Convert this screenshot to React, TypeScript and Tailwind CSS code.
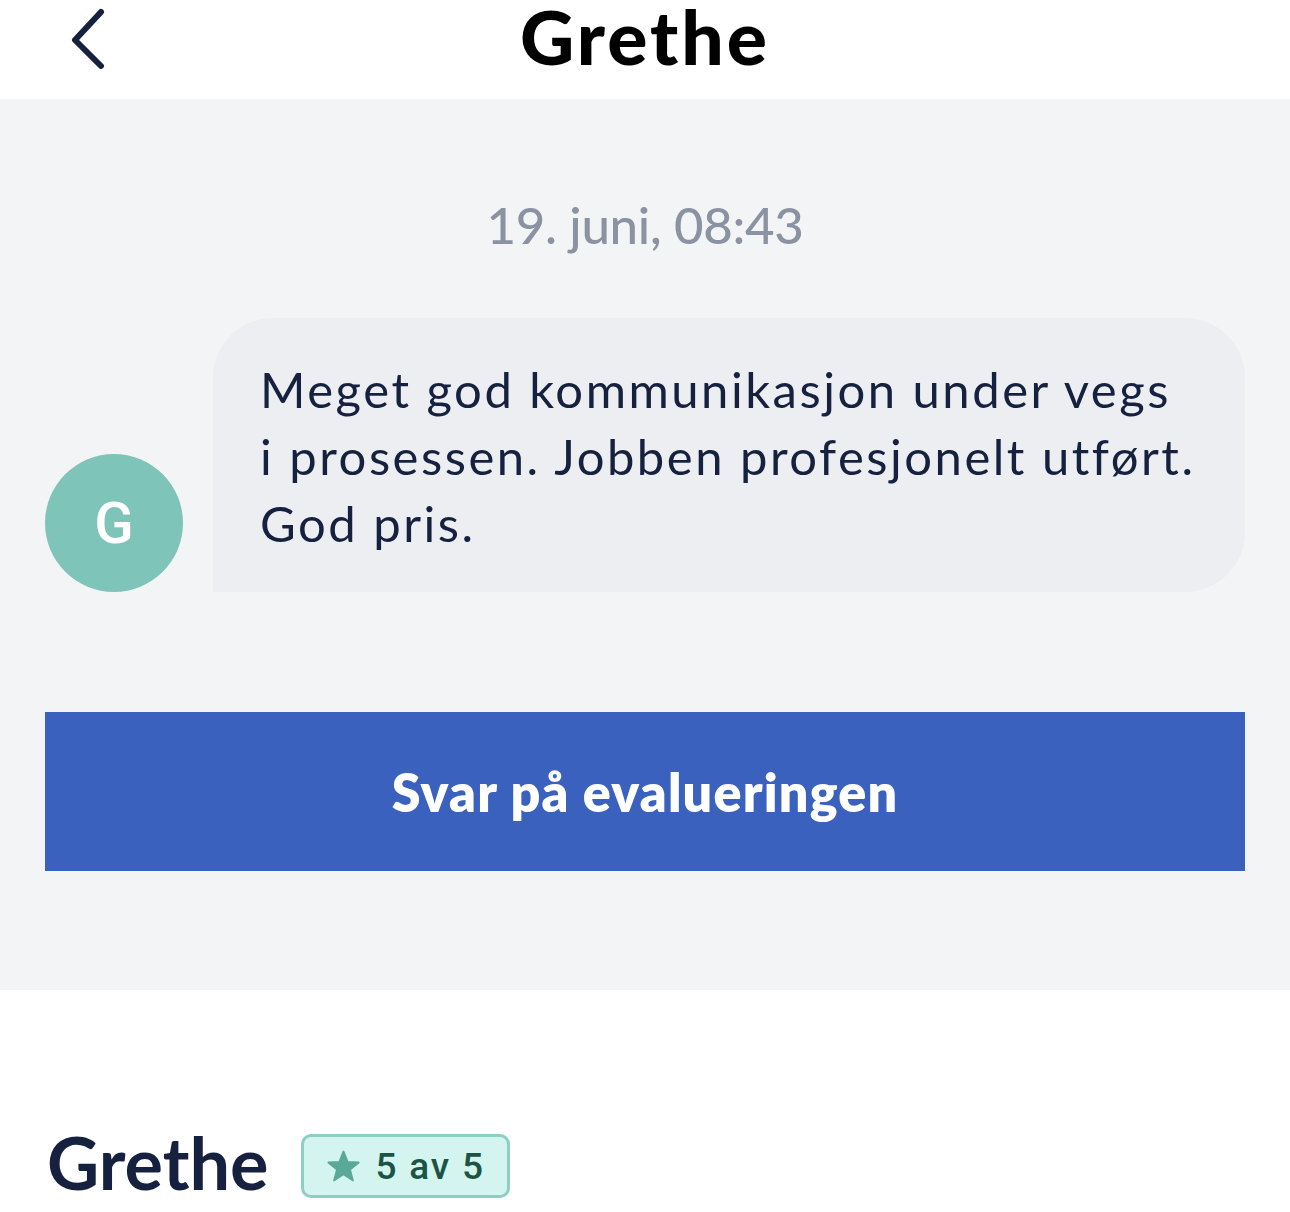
import React from "react";

export default function App() {
  return (
    <div className="w-[1290px] h-[1212px] overflow-hidden bg-white font-['Lato',sans-serif]">
      {/* Header */}
      <div className="h-[99px] bg-white relative flex items-start justify-center">
        <button className="absolute left-[62px] top-[6px] w-[50px] h-[66px] flex items-center justify-center">
          <svg width="44" height="62" viewBox="0 0 44 62" fill="none">
            <path d="M36 4 L10 32 L36 58" stroke="#16213f" strokeWidth="6" strokeLinecap="round" strokeLinejoin="round" />
          </svg>
        </button>
        <h1 className="text-[75px] leading-[72px] font-black text-black tracking-[3px]">Grethe</h1>
      </div>

      {/* Gray conversation area */}
      <div className="bg-[#f3f4f6] h-[891px] px-[45px] pt-[96px]">
        <div className="text-center text-[51px] leading-[60px] text-[#8b92a1] font-medium tracking-[-0.3px]">19. juni, 08:43</div>
        <div className="mt-[63px] flex items-end gap-[30px]">
          <div className="w-[138px] h-[138px] rounded-full bg-[#7fc4b9] flex items-center justify-center shrink-0">
            <span className="text-white text-[58px] font-['Roboto',sans-serif] font-medium leading-none">G</span>
          </div>
          <div className="flex-1 bg-[#eceef2] rounded-tl-[60px] rounded-tr-[60px] rounded-br-[60px] pl-[47px] pr-[30px] pt-[38px] pb-[35px]">
            <p className="text-[49px] leading-[67px] text-[#16213f] whitespace-nowrap tracking-[2.5px]">
              Meget god kommunikasjon under vegs
              <br />
              i prosessen. Jobben profesjonelt utført.
              <br />
              God pris.
            </p>
          </div>
        </div>
        <button className="mt-[120px] w-full h-[159px] bg-[#3b61bf] flex items-center justify-center">
          <span className="text-white text-[52px] font-extrabold tracking-[1.2px]">Svar på evalueringen</span>
        </button>
      </div>

      {/* Bottom white */}
      <div className="px-[47px] pt-[136px] flex items-center gap-[33px]">
        <h2 className="text-[72px] leading-none font-bold text-[#16213f]">Grethe</h2>
        <div className="mt-[8px] h-[64px] px-[22px] rounded-[10px] border-[3px] border-[#8ccfc3] bg-[#d3f4ef] flex items-center gap-[14px]">
          <svg width="35" height="33" viewBox="0 0 24 23">
            <path d="M12 1 L14.9 8.3 L22.6 8.7 L16.6 13.7 L18.6 21.3 L12 17 L5.4 21.3 L7.4 13.7 L1.4 8.7 L9.1 8.3 Z" fill="#5aa897" stroke="#5aa897" strokeWidth="1.2" strokeLinejoin="round" />
          </svg>
          <span className="text-[37px] leading-none text-[#1b5344] font-['Roboto',sans-serif] font-medium tracking-[1.8px]">5 av 5</span>
        </div>
      </div>
    </div>
  );
}
